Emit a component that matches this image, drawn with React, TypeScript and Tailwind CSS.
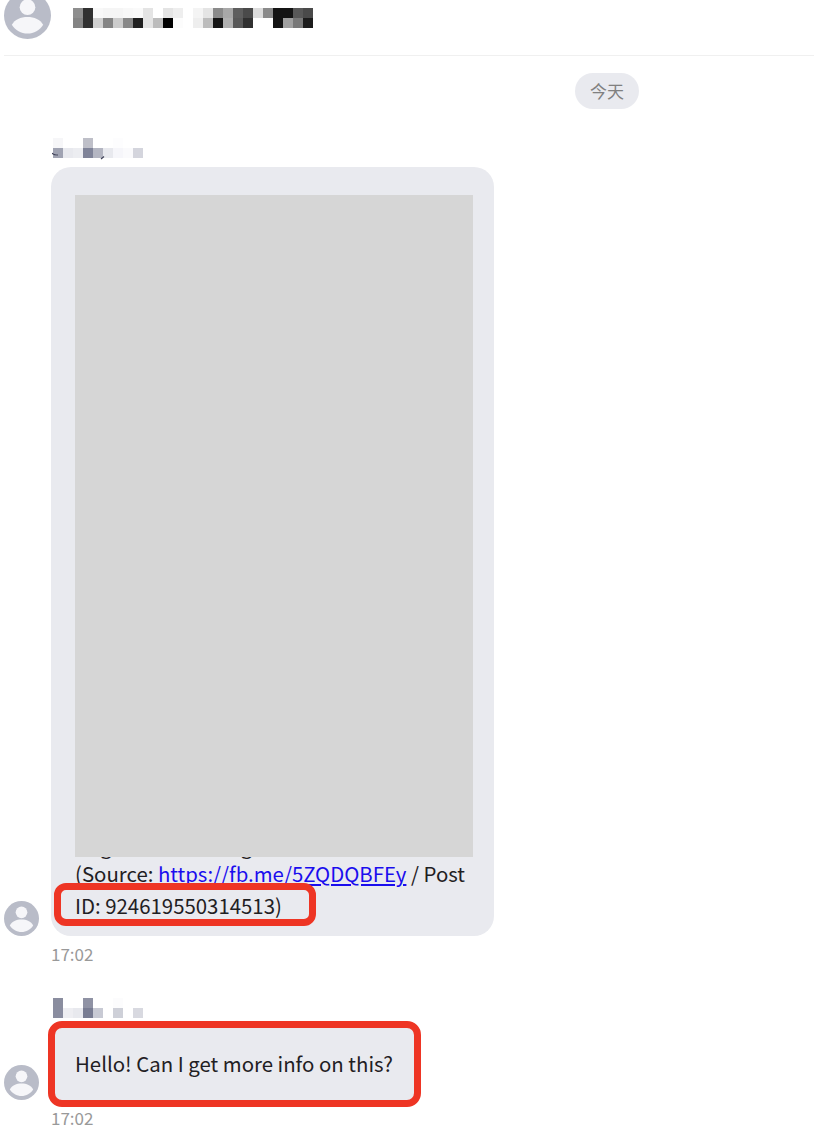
const headerMosaic = [
  ['#8e8e8e', '#303030', '#f8f8f8', '#f5f5f5', '#f5f5f5', '#f8f8f8', '#fafafa', '#e4e4e4', '#ffffff', '#e4e4e4', '#eeeeee', '#ffffff', '#f4f4f4', '#e4e4e4', '#8a8a8a', '#a8a8a8', '#5e5e5e', '#4a4a4a', '#dcdcdc', '#8a8a8a', '#141414', '#141414', '#585858', '#4a4a4a'],
  ['#848484', '#303030', '#d0d0d0', '#848484', '#cccccc', '#888888', '#202020', '#e4e4e4', '#bcbcbc', '#000000', '#fcfcfc', '#ffffff', '#eeeeee', '#bcbcbc', '#141414', '#b0b0b0', '#585858', '#303030', '#ffffff', '#ffffff', '#141414', '#a0a0a0', '#787878', '#1c1c1c'],
];

const senderMosaic = [
  ['#f6f6f8', '#ffffff', '#ffffff', '#bebfc8', '#ffffff', '#ffffff', '#fdfdfe', '#ffffff', '#ffffff'],
  ['#a0a3b2', '#e8e9ee', '#ecedf1', '#7f8398', '#b4b6c2', '#e8e9ee', '#f6f6fa', '#fafafc', '#d4d5dd'],
];

const replyMosaic = [
  ['#8a8d9f', '#ffffff', '#ffffff', '#8f92a4', '#ffffff', '#ffffff', '#fcfcfd', '#ffffff', '#ffffff'],
  ['#8a8da0', '#eeeef2', '#e8e9ee', '#787c92', '#c8cad4', '#ffffff', '#ced0d8', '#ffffff', '#d8d9e0'],
];

function Mosaic({ rows }: { rows: string[][] }) {
  return (
    <div className="flex flex-col">
      {rows.map((row, i) => (
        <div key={i} className="flex">
          {row.map((color, j) => (
            <div key={j} className="size-[10px]" style={{ backgroundColor: color }} />
          ))}
        </div>
      ))}
    </div>
  );
}

function Avatar({ size }: { size: string }) {
  return (
    <svg viewBox="0 0 48 48" className={size}>
      <circle cx="24" cy="24" r="24" fill="#b9bcc8" />
      <circle cx="24" cy="15.5" r="8" fill="#f6f6f9" />
      <path d="M8 33.5 C11 28 17 25.5 24 25.5 C31 25.5 37 28 40 33.5 C36.5 39 30.5 42.5 24 42.5 C17.5 42.5 11.5 39 8 33.5 Z" fill="#f6f6f9" />
    </svg>
  );
}

function Time() {
  return <div className="pl-[51px] text-[17px] leading-[24px] text-[#999999]">17:02</div>;
}

export default function App() {
  return (
    <div className="h-[1144px] w-[814px] overflow-hidden bg-white font-['Noto_Sans_CJK_SC','Noto_Sans',sans-serif] text-[20.4px] text-[#1f2023]">
      <header className="ml-1 flex h-[56px] items-start gap-[22px] border-b border-[#f0f0f0]">
        <div className="-mt-2 shrink-0">
          <Avatar size="size-[47px]" />
        </div>
        <div className="mt-2">
          <Mosaic rows={headerMosaic} />
        </div>
      </header>

      <div className="mt-[17px] ml-[575px] flex h-9 w-16 items-center justify-center rounded-full bg-[#e9eaef] text-[17px] text-[#808080]">
        今天
      </div>

      <div className="relative mt-[29px] ml-[53px]">
        <Mosaic rows={senderMosaic} />
        {/* bits of the name that stick out under the mosaic */}
        <svg viewBox="0 0 60 10" className="absolute top-[14px] -left-px h-[10px] w-[60px]" fill="none" stroke="#3f4258" strokeWidth="1.2">
          <path d="M0 1 C1 2.5 3 3 6 3" />
          <path d="M49 7 L52 4.5" />
        </svg>
      </div>

      <div className="relative mt-[9px] flex items-end gap-3 pl-1">
        <Avatar size="size-[35px] shrink-0" />
        <div className="w-[443px] rounded-[20px] bg-[#e9eaef] px-6 pt-7 pb-[15px]">
          <div className="relative z-10 mr-[-3px] h-[662px] bg-[#d6d6d6]" />
          <div className="-mt-[28px] flex h-[28px] gap-[129px] pl-[25px] leading-8">
            <span>g</span>
            <span>g</span>
          </div>
          <div className="leading-[32px]">
            (Source:{' '}
            <a href="#" className="text-[#1a0dee] underline">
              https://fb.me/5ZQDQBFEy
            </a>{' '}
            / Post ID: 924619550314513)
          </div>
        </div>
        <div className="absolute top-[716px] left-[54px] h-[43px] w-[262px] rounded-xl border-[7px] border-[#ee3524]" />
      </div>

      <div className="mt-[6px]">
        <Time />
      </div>

      <div className="mt-[32px] ml-[53px]">
        <Mosaic rows={replyMosaic} />
      </div>

      <div className="relative mt-[6px] flex items-end gap-3 pl-1">
        <Avatar size="size-[35px] shrink-0 mb-1" />
        <div className="flex h-[80px] w-[366px] items-center rounded-[12px] bg-[#e9eaef] px-6 pb-[2px] whitespace-nowrap">Hello! Can I get more info on this?</div>
        <div className="absolute -top-[3px] left-[48px] h-[86px] w-[373px] rounded-[14px] border-[7px] border-[#ee3524]" />
      </div>

      <div className="mt-[2px]">
        <Time />
      </div>
    </div>
  );
}
